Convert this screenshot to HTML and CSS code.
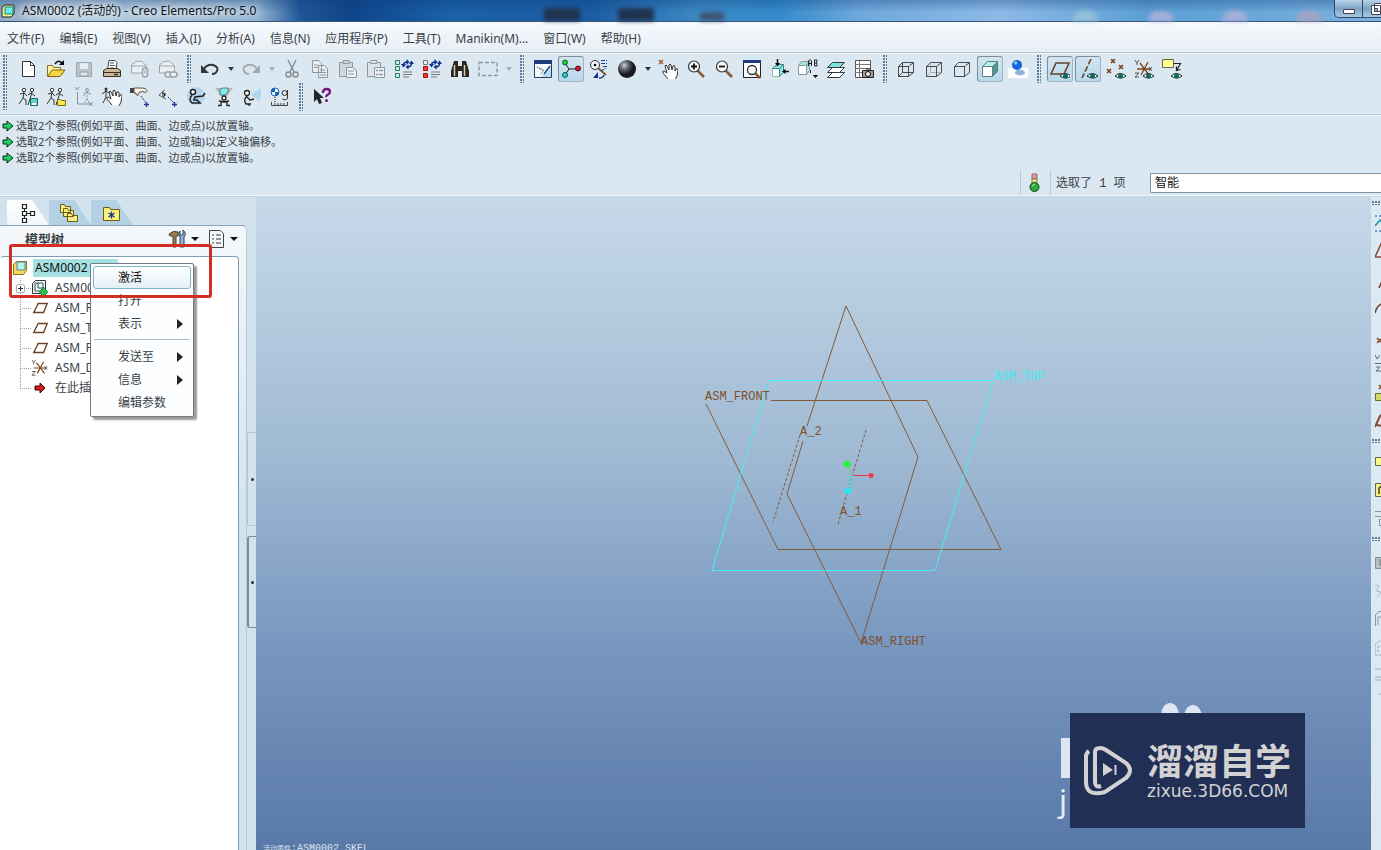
FILE: index.html
```html
<!DOCTYPE html>
<html lang="zh-CN">
<head>
<meta charset="utf-8">
<title>ASM0002 (活动的) - Creo Elements/Pro 5.0</title>
<link rel="stylesheet" href="styles.css">
</head>
<body>
<svg class="defs" aria-hidden="true">
  <symbol id="plane" viewBox="0 0 20 20"><path d="M8 5h10l-4 10H3z" fill="none" stroke="#6b4228" stroke-width="1.5"/></symbol>
  <symbol id="eye" viewBox="0 0 20 20"><path d="M9 16q5-5 11 0q-5 4-11 0z" fill="#fff" stroke="#222"/><circle cx="14.500" cy="16" r="2.500" fill="#0a6a5c"/></symbol>
  <symbol id="csys" viewBox="0 0 20 20"><path d="M3 10h14M6 4l9 12M14 3L7 16" stroke="#7a4420" fill="none" stroke-width="1.300"/><path d="M1 1l2 3 2-3M3 4v2M1 14h4l-4 4h4M15 8l3 4m0-4l-3 4" stroke="#555" fill="none"/></symbol>
  <symbol id="refresh" viewBox="0 0 20 20"><path d="M9.500 6q0-3 4-3M17.500 4q0 4-4 4" fill="none" stroke="#12308c" stroke-width="1.600"/><path d="M12.500 0l3 3-3 3zM7 5h5L9.500 8.500zM14.500 5.500l-3 2.500 3 2.500zM15 5h5l-2.500-3.500z" fill="#12308c"/><path d="M9 13h9M9 15.500h9M9 18h6" stroke="#777"/></symbol>
  <symbol id="hand" viewBox="0 0 20 20"><path d="M9 18L4 12q-1-2 1-2l3 2-2-7q1-2 2 0l2 4V4q1-2 2 0l1 5 1-4q2-1 2 1v4l1-2q2-1 2 1l-1 6-2 4" fill="#fff" stroke="#333"/></symbol>
  <symbol id="man" viewBox="0 0 20 20"><circle cx="6" cy="3" r="1.700"/><circle cx="14" cy="3" r="1.700"/><path d="M6 5l-1 6M2 7l4-1 3 3M5 11l-4 6M5 11l3 2v5M14 5l-2 7M10 8l3-2 4 3M12 12l-2 6M12 12l3 3"/></symbol>
  <symbol id="arrow" viewBox="0 0 12 12"><path d="M1 4h4V1l6 5-6 5V8H1z" fill="#20d060" stroke="#0b2a12"/></symbol>
</svg>

<header class="titlebar">
  <svg class="app-icon" viewBox="0 0 16 16"><path d="M2 4l3-2h9v9l-3 3H2z" fill="#f3ef8c" stroke="#222"/><path d="M5 4h8v7H5z" fill="#6fe8ee" stroke="#187"/></svg>
  <h1 class="title">ASM0002 (活动的) - Creo Elements/Pro 5.0</h1>
  <i class="blot"></i><i class="blot"></i><i class="blot small"></i>
  <i class="glow"></i><i class="glow rose"></i><i class="glow rose"></i><i class="glow red"></i>
  <div class="window-buttons">
    <button aria-label="最小化"><svg viewBox="0 0 14 14"><path d="M1.500 7.500h11v4h-11z" fill="#fff" stroke="#445"/></svg></button>
    <button aria-label="还原"><svg viewBox="0 0 14 14"><path d="M4.500 1.500h9v8h-9zM1.500 3.500h9v9h-9z" fill="#fff" stroke="#445" /><path d="M4.500 6.500h3v3h-3z" fill="#9bc" stroke="#445"/></svg></button>
  </div>
</header>

<nav class="menubar">
  <button>文件(F)</button><button>编辑(E)</button><button>视图(V)</button><button>插入(I)</button><button>分析(A)</button><button>信息(N)</button><button>应用程序(P)</button><button>工具(T)</button><button>Manikin(M)...</button><button>窗口(W)</button><button>帮助(H)</button>
</nav>

<section class="toolbars">
  <i class="grip tall"></i>
  <div class="toolbar-rows">
    <div class="toolbar">
      <button class="tool" aria-label="新建"><svg viewBox="0 0 20 20"><path d="M4.500 2.500h8l4 4v11h-12z" fill="#fff" stroke="#333"/><path d="M12.500 2.500v4h4" fill="none" stroke="#333"/></svg></button>
      <button class="tool" aria-label="打开"><svg viewBox="0 0 20 20"><path d="M1.500 17V6.500h5l1 2h7V11" fill="#fff3a0" stroke="#8a7420"/><path d="M1.500 17.500L6 11h13l-5 6.500z" fill="#f5d548" stroke="#7d6410"/><path d="M9 5q3-5 7-1" fill="none" stroke="#111" stroke-width="1.500"/><path d="M18 1v5h-5z"/></svg></button>
      <button class="tool" aria-label="保存"><svg viewBox="0 0 20 20"><path d="M2.500 3.500h15v14h-15z" fill="#bcc4ca" stroke="#9aa4ac"/><path d="M6 4h8v6H6z" fill="#e6ecf0"/><path d="M6 13h8v4H6z" fill="#dde5ea" stroke="#98a2aa"/></svg></button>
      <button class="tool" aria-label="打印"><svg viewBox="0 0 20 20"><path d="M5.500 11L7 1.500h6l2 2-1 7.500" fill="#fff" stroke="#444"/><path d="M8 4h4M8 6.500h5M8 9h4" stroke="#555"/><path d="M1.500 11.500l3-2h11l3 2v6h-17z" fill="#cdb697" stroke="#3a3027"/><path d="M2 13.500h16" stroke="#3a3027"/><path d="M12 15.500h4" stroke="#3a3027" stroke-width="1.500"/></svg></button>
      <button class="tool" aria-label="发送附件"><svg viewBox="0 0 20 20" fill="#e9eff3" stroke="#9aa3aa"><path d="M1.500 14V6q4-5 10-4l5 5v7z"/><path d="M2 7h14" fill="none"/><rect x="12.500" y="9" width="5" height="9" rx="2.500" stroke-width="1.500"/><path d="M15 11v4"/></svg></button>
      <button class="tool" aria-label="发送链接"><svg viewBox="0 0 20 20" fill="#e9eff3" stroke="#9aa3aa"><path d="M1.500 14V6q4-5 10-4l5 5v7z"/><path d="M2 7h14" fill="none"/><rect x="7" y="13" width="7" height="5" rx="2.500" stroke-width="1.500"/><rect x="12" y="13" width="7" height="5" rx="2.500" stroke-width="1.500"/></svg></button>
      <i class="grip"></i>
      <button class="tool" aria-label="撤消"><svg viewBox="0 0 20 20"><path d="M4 10q3-5 9-4 6 2 4 6-1 3-5 3" fill="none" stroke="#30363c" stroke-width="2"/><path d="M1 6v8h8z" fill="#30363c"/></svg></button>
      <button class="drop" aria-label="撤消列表"></button>
      <button class="tool" aria-label="重做"><svg viewBox="0 0 20 20"><path d="M16 10q-3-5-9-4-6 2-4 6 1 3 5 3" fill="none" stroke="#a3abb2" stroke-width="2"/><path d="M19 6v8h-8z" fill="#a3abb2"/></svg></button>
      <button class="drop off" aria-label="重做列表"></button>
      <button class="tool" aria-label="剪切"><svg viewBox="0 0 20 20" fill="none" stroke="#858d94" stroke-width="1.400"><path d="M6 1l6 12M14 1L8 13"/><circle cx="6.500" cy="15.500" r="2.500"/><circle cx="13.500" cy="15.500" r="2.500"/></svg></button>
      <button class="tool" aria-label="复制"><svg viewBox="0 0 20 20" fill="#e8eef2" stroke="#8f989f"><path d="M2.500 1.500h6l3 3v9h-9zM8.500 6.500h6l3 3v9h-9z"/><path d="M4 6h4M4 8.500h4M10 11h5M10 13.500h6M10 16h6"/></svg></button>
      <button class="tool" aria-label="粘贴"><svg viewBox="0 0 20 20" fill="#d0d7dc" stroke="#8f989f"><path d="M1.500 3.500h13v14h-13z"/><path d="M5 1.500h6v3H5z"/><path d="M8.500 8.500h6l4 3v7h-10z" fill="#eef2f5"/><path d="M10 12h6M10 15h6"/></svg></button>
      <button class="tool" aria-label="选择性粘贴"><svg viewBox="0 0 20 20" fill="#dde5ea" stroke="#8f989f"><path d="M1.500 3.500h13v14h-13z"/><path d="M5 1.500h6v3H5z"/><path d="M8.500 8.500h10v10h-10z" fill="#eef2f5"/><path d="M10 11.500h2M13 11.500h4M10 15.500h2M13 15.500h4" stroke-width="1.500"/></svg></button>
      <button class="tool" aria-label="再生"><svg viewBox="0 0 20 20"><path d="M1.500 1.500h4v4h-4zM1.500 7.500h4v4h-4zM1.500 14.500h4v4h-4z" fill="#c6ecdc" stroke="#317865"/><use href="#refresh"/></svg></button>
      <button class="tool" aria-label="再生管理器"><svg viewBox="0 0 20 20"><path d="M1.500 1.500h4v4h-4z" fill="#eee" stroke="#777"/><path d="M1.500 7.500h4v4h-4z" fill="#ee3a30" stroke="#a11"/><path d="M1.500 14.500h4v4h-4z" fill="#ee3a30" stroke="#a11"/><use href="#refresh"/></svg></button>
      <button class="tool" aria-label="查找"><svg viewBox="0 0 20 20"><path d="M4 2h4v5h4V2h4l3 10v6h-7v-6H8v6H1v-6z" fill="#2b2620"/><path d="M4.500 6v11M14.500 6v11" stroke="#d9c9ae" stroke-width="1.500"/></svg></button>
      <button class="tool" aria-label="选取框"><svg viewBox="0 0 20 20"><path d="M1 3.500h18v13H1z" fill="none" stroke="#8c959c" stroke-width="1.400" stroke-dasharray="4 2"/></svg></button>
      <button class="drop off" aria-label="选取框列表"></button>
      <i class="grip"></i>
      <button class="tool" aria-label="重画"><svg viewBox="0 0 20 20"><path d="M1.500 1.500h17v17h-17z" fill="#f4fbfe" stroke="#233c66"/><path d="M1 1h18v4H1z" fill="#1c3f7a"/><path d="M18 6v12H8z" fill="#b9ddf0"/><path d="M4 8l7 3-4 5M6 9l4 4" stroke="#444" stroke-dasharray="1 1" fill="none"/><path d="M17 7l-6 8" stroke="#1c3f7a" stroke-width="1.300"/></svg></button>
      <button class="tool on" aria-label="旋转中心"><svg viewBox="0 0 20 20"><path d="M4 4l4 6h9M8 10l-4 6" fill="none" stroke="#222"/><circle cx="4" cy="3.500" r="2.500" fill="#23c93a" stroke="#063"/><circle cx="17" cy="9.500" r="2.500" fill="#c3213a" stroke="#501"/><circle cx="4" cy="16" r="2.500" fill="#2fd6d0" stroke="#055"/></svg></button>
      <button class="tool" aria-label="定向模式"><svg viewBox="0 0 20 20"><circle cx="6" cy="6" r="4.500" fill="#eef6fa" stroke="#333"/><circle cx="6" cy="6" r="1.300"/><path d="M9 9l8 7" stroke="#7a5a3a" stroke-width="2"/><path d="M12 1.500h6M12 4.500h6M14 7.500h4M12 12l5-3" stroke="#1b3ba0" stroke-dasharray="4 1"/><path d="M10 19q4 0 5-3" stroke="#12308c" stroke-width="1.300" fill="none"/><path d="M9 13v6H4z" fill="#12308c"/></svg></button>
      <button class="tool" aria-label="外观库"><svg viewBox="0 0 20 20"><defs><radialGradient id="ball" cx=".35" cy=".3"><stop offset="0" stop-color="#c9ced2"/><stop offset=".5" stop-color="#5d636a"/><stop offset="1" stop-color="#17191c"/></radialGradient></defs><circle cx="10" cy="10" r="9" fill="url(#ball)"/></svg></button>
      <button class="drop" aria-label="外观列表"></button>
      <button class="tool" aria-label="拖动元件"><svg viewBox="0 0 20 20"><use href="#hand" x="1" y="2"/><path d="M1 1l4 4m0-4L1 5" stroke="#a2562a" stroke-width="1.500"/></svg></button>
      <button class="tool" aria-label="放大"><svg viewBox="0 0 20 20"><path d="M11 11l7 7" stroke="#8a5a35" stroke-width="2.600"/><circle cx="8" cy="7.500" r="5.500" fill="#f4f8fb" stroke="#333" stroke-width="1.200"/><path d="M5 7.500h6M8 4.500v6" stroke="#111" stroke-width="1.800"/></svg></button>
      <button class="tool" aria-label="缩小"><svg viewBox="0 0 20 20"><path d="M11 11l7 7" stroke="#8a5a35" stroke-width="2.600"/><circle cx="8" cy="7.500" r="5.500" fill="#f4f8fb" stroke="#333" stroke-width="1.200"/><path d="M5 7.500h6" stroke="#111" stroke-width="1.800"/></svg></button>
      <button class="tool" aria-label="重新调整"><svg viewBox="0 0 20 20"><path d="M1.500 2.500h17v16h-17z" fill="#fff" stroke="#222"/><path d="M1 1h18v3H1z" fill="#1d3a78"/><path d="M13 14l5 5" stroke="#8a5a35" stroke-width="2.500"/><circle cx="10" cy="11" r="4.500" fill="#eff6f5" stroke="#333" stroke-width="1.300"/></svg></button>
      <button class="tool" aria-label="重定向"><svg viewBox="0 0 20 20"><path d="M2.500 9.500h7v8h-7z" fill="#fff" stroke="#8ba"/><path d="M2.500 9.500l4-4h7l-4 4zM9.500 9.500l4-4v8l-4 4z" fill="#8ee5df" stroke="#488"/><path d="M7.500 0v5M19 12.500h-5" stroke="#111" stroke-width="1.500"/><path d="M5 4h5l-2.500 3.500zM15.500 10v5L12 12.500z"/></svg></button>
      <button class="tool" aria-label="视图列表"><svg viewBox="0 0 20 20"><path d="M.500 6.500h8v9h-8z" fill="#fff" stroke="#899"/><path d="M.500 6.500l3-4h8l-3 4zM8.500 6.500l3-4v9l-3 4z" fill="#a5e8e5" stroke="#899"/><path d="M10.500 7V2l1.500-1.500L13.500 2v5M10.500 4.500h3M16.500 1v6H19V4.500L18 4l1-1V1zM16.500 4H18M12.500 11v3" fill="none" stroke="#222"/><path d="M15 16h5l-2.500 3z"/></svg></button>
      <button class="tool" aria-label="层"><svg viewBox="0 0 20 20" stroke="#2f3b40"><path d="M1.500 18.500l5-5h12l-5 5z" fill="#fff"/><path d="M1.500 13.500l5-5h12l-5 5z" fill="#fff"/><path d="M1.500 8.500l5-5h12l-5 5z" fill="#7fe2dc"/></svg></button>
      <button class="tool" aria-label="视图管理器"><svg viewBox="0 0 20 20"><path d="M1.500 1.500h15v17h-15z" fill="#fff" stroke="#555"/><path d="M1 5.500h15M1 9.500h15M1 13.500h15M5.500 2v16" stroke="#777"/><path d="M8.500 11.500h11v7h-11z" fill="#a39e95" stroke="#222"/><path d="M12 10h4" stroke="#222"/><circle cx="14" cy="15" r="2.500" fill="#eee" stroke="#111"/></svg></button>
      <i class="grip"></i>
      <button class="tool" aria-label="线框"><svg viewBox="0 0 20 20" fill="none" stroke="#454b50"><path d="M2.500 7.500h10v10h-10zM6.500 3.500h11v10h-11zM2.500 7.500l4-4M12.500 7.500l5-4M12.500 17.500l5-4M2.500 17.500l4-4"/></svg></button>
      <button class="tool" aria-label="隐藏线"><svg viewBox="0 0 20 20" fill="none" stroke="#454b50"><path d="M6.500 4v9.500h11M2.500 17.500l4-4" stroke="#a9b3ba"/><path d="M2.500 7.500h10v10h-10zM2.500 7.500l4-4h11v10l-5 4M12.500 7.500l5-4"/></svg></button>
      <button class="tool" aria-label="消隐"><svg viewBox="0 0 20 20" fill="none" stroke="#454b50"><path d="M2.500 7.500h10v10h-10zM2.500 7.500l4-4h11v10l-5 4M12.500 7.500l5-4"/></svg></button>
      <button class="tool on" aria-label="着色"><svg viewBox="0 0 20 20" stroke="#66807f"><path d="M2.500 7.500h10v10h-10z" fill="#fff"/><path d="M2.500 7.500l5-5h10l-5 5z" fill="#b5f0ee"/><path d="M12.500 7.500l5-5v10l-5 5z" fill="#4b9a98"/></svg></button>
      <button class="tool" aria-label="增强真实感"><svg viewBox="0 0 20 20"><path d="M0 9h20v10H0z" fill="#fff"/><ellipse cx="12" cy="13.500" rx="5" ry="3" fill="#8eb4dc"/><circle cx="9" cy="6" r="5" fill="#1268d8"/><circle cx="7.500" cy="4" r="1.800" fill="#84c1ff"/></svg></button>
      <i class="grip"></i>
      <button class="tool on" aria-label="平面显示"><svg viewBox="0 0 20 20"><path d="M6 4h13l-5 11H1z" fill="none" stroke="#6b4228" stroke-width="1.600"/><use href="#eye" x="1" y="1"/></svg></button>
      <button class="tool on" aria-label="轴显示"><svg viewBox="0 0 20 20"><path d="M13 0L4 19" stroke="#6b4228" stroke-width="1.600" stroke-dasharray="6 2"/><use href="#eye" y="1"/></svg></button>
      <button class="tool" aria-label="点显示"><svg viewBox="0 0 20 20"><path d="M5 0l4 4m0-4L5 4M13 6l4 4m0-4l-4 4M1 10l4 4m0-4l-4 4" stroke="#7a4420" stroke-width="1.600"/><use href="#eye" y="1"/></svg></button>
      <button class="tool" aria-label="坐标系显示"><svg viewBox="0 0 20 20"><use href="#csys"/><use href="#eye" y="1"/></svg></button>
      <button class="tool" aria-label="注释显示"><svg viewBox="0 0 20 20"><path d="M.500.500h11v8h-11z" fill="#ffff8c" stroke="#665"/><path d="M12 4.500h6.500l-4 7m0-4v4l4-1" fill="none" stroke="#222" stroke-width="1.200"/><use href="#eye" y="1"/></svg></button>
    </div>
    <div class="toolbar">
      <button class="tool" aria-label="保存人体模型"><svg viewBox="0 0 20 20"><use href="#man" class="ink"/><path d="M12.500 11.500h7v7h-7z" fill="#5fcfc9" stroke="#266"/><path d="M14 16h4v2h-4z" fill="#fff"/></svg></button>
      <button class="tool" aria-label="打开人体模型"><svg viewBox="0 0 20 20"><use href="#man" class="ink"/><path d="M11.500 18.500v-6h3l1 1h4v5z" fill="#f7ea4c" stroke="#776a10"/></svg></button>
      <button class="tool" aria-label="人体坐标"><svg viewBox="0 0 20 20" fill="none" stroke="#899299"><path d="M3.500 5v12H16M1 0l2 3 2-3M15 15l4 4m0-4l-4 4" /><circle cx="13" cy="3" r="1.500"/><path d="M13 5v6M10 9V6h6v3M11 16l2-5 2 5" stroke-dasharray="2 1"/></svg></button>
      <button class="tool" aria-label="拖动人体"><svg viewBox="0 0 20 20"><circle cx="4" cy="2" r="1.500" fill="#333"/><path d="M4 3v7M0 7l4-3 5 3M4 10l-3 6" fill="none" stroke="#333"/><use href="#hand" x="1"/></svg></button>
      <button class="tool" aria-label="伸及"><svg viewBox="0 0 20 20"><path d="M4 1h7q6 0 6 3.500l-1 1-4-1-3 1-1 3-2-1V6H4z" fill="#fdf3e6" stroke="#554"/><path d="M0 1h4v5H0z" fill="#444"/><path d="M11 9l6 8" stroke="#1a3a90" stroke-dasharray="2 1"/><path d="M14 17.500h5M16.500 15v5" stroke="#1a3a90" stroke-width="1.300"/></svg></button>
      <button class="tool" aria-label="注视"><svg viewBox="0 0 20 20"><path d="M7 3L1 8l7 4M5 4q-2 4 1 7" fill="#fff" stroke="#555"/><path d="M4.500 5.500q2 2 .5 4.500l2.500-1V6z" fill="#123"/><path d="M10 10l6 6" stroke="#1a3a90" stroke-dasharray="2 1"/><path d="M14 17.500h5M16.500 15v5" stroke="#1a3a90" stroke-width="1.300"/></svg></button>
      <button class="tool" aria-label="可达区"><svg viewBox="0 0 20 20"><circle cx="10" cy="9" r="9" fill="#b1d6ee"/><circle cx="7" cy="5" r="2.500" fill="#fff" stroke="#222" stroke-width="1.500"/><path d="M6 8q-4 5 0 8h8l-3-3H8l1-3 8-1 2-3" fill="none" stroke="#222" stroke-width="1.500"/></svg></button>
      <button class="tool" aria-label="视野"><svg viewBox="0 0 20 20"><path d="M1 1h18l-6 8H7z" fill="#b6b6aa"/><path d="M6 2l3-1h5v5l-3 2H6z" fill="#86e8e8" stroke="#488"/><circle cx="10" cy="11" r="2" fill="#fff" stroke="#222" stroke-width="1.300"/><path d="M4 18.500h3v-3q3-2 6 0v3h3M5 14l5 1 5-1" fill="none" stroke="#222" stroke-width="1.300"/></svg></button>
      <button class="tool" aria-label="视锥"><svg viewBox="0 0 20 20"><path d="M9 8l9-7q3 7-1 13z" fill="#b1d6ee"/><circle cx="5" cy="6" r="2.500" fill="#fff" stroke="#222" stroke-width="1.300"/><path d="M5 9q-4 4-1 8h5M5 10l3 3 4-1M7 17v2" fill="none" stroke="#222" stroke-width="1.300"/></svg></button>
      <button class="tool" aria-label="质量分析"><svg viewBox="0 0 20 20"><circle cx="5" cy="5" r="4" fill="#fff" stroke="#1466c0"/><path d="M5 1v4H1a4 4 0 0 1 4-4M5 5h4a4 4 0 0 1-4 4z" fill="#1466c0"/><path d="M5 10v6" stroke="#111" stroke-dasharray="1 1"/><path d="M1.500 15v3.500h16V15M5 16v2M8 16v2M11 16v2M14 16v2" fill="none" stroke="#444"/><circle cx="14.500" cy="6" r="2.500" fill="none" stroke="#333"/><path d="M17.500 3v8q-1 3-5 1" fill="none" stroke="#333"/></svg></button>
      <i class="grip"></i>
      <button class="tool" aria-label="帮助"><svg viewBox="0 0 20 20"><path d="M2 2v13l3-3 2 5 3-1-2-5h4z" fill="#20252c"/><path d="M11 6q0-4 3.500-4T18 5q0 1.500-2 2.500T14.500 10" fill="none" stroke="#7a147c" stroke-width="2.400"/><circle cx="14.500" cy="13.500" r="1.500" fill="#7a147c"/></svg></button>
    </div>
  </div>
</section>

<section class="messages">
  <ul class="log">
    <li><svg><use href="#arrow"/></svg>选取2个参照(例如平面、曲面、边或点)以放置轴。</li>
    <li><svg><use href="#arrow"/></svg>选取2个参照(例如平面、曲面、边或轴)以定义轴偏移。</li>
    <li><svg><use href="#arrow"/></svg>选取2个参照(例如平面、曲面、边或点)以放置轴。</li>
  </ul>
  <div class="status">
    <span class="light"><svg viewBox="0 0 12 20"><path d="M4 1h5v5H4z" fill="#d99aa5" stroke="#966"/><path d="M4 6h5v5H4z" fill="#f4e27e" stroke="#875"/><circle cx="6.500" cy="14" r="4.500" fill="#32a83c" stroke="#0a4a14"/><path d="M4 13l3-2" stroke="#b7f0b0"/></svg></span>
    <label class="picked" for="filter">选取了 1 项</label>
    <select id="filter" class="filter"><option>智能</option></select>
  </div>
</section>

<main class="workspace">
  <aside class="side">
    <div class="navigator">
      <div class="tabs">
        <button class="tab current" aria-label="模型树"><svg viewBox="0 0 20 20" fill="none" stroke="#222" stroke-width="1.200"><path d="M5.500 1.500h4v4h-4zM5.500 8.500h4v4h-4zM13.500 8.500h4v4h-4zM5.500 15.500h4v4h-4zM9.500 10.500h4M7.500 5.500v3M7.500 12.500v3"/></svg></button>
        <button class="tab" aria-label="文件夹浏览器"><svg viewBox="0 0 20 20" fill="#f7ec86" stroke="#6b5c10"><path d="M1.500 9.500v-8h4l1 2h5v6zM4.500 13.500v-8h4l1 2h5v6zM8.500 18.500v-8h4l1 2h5v6z"/></svg></button>
        <button class="tab" aria-label="收藏夹"><svg viewBox="0 0 20 20"><path d="M2.500 17.500v-13h6l1 2h9v11z" fill="#f9ee7e" stroke="#6b5c10"/><path d="M10.500 8.500v7M7.500 10l6 4M13.500 10l-6 4" stroke="#1b2c8c" stroke-width="1.300"/></svg></button>
      </div>
      <div class="pane">
        <div class="pane-head">
          <h2>模型树</h2>
          <button class="pane-tool" aria-label="设置"><svg viewBox="0 0 20 20"><path d="M1 5q4-4 9-2v4H8v11H5V7H2z" fill="#a07c56" stroke="#443"/><path d="M12 18V8q-3-3 0-6v4h3V1q4 3 1 7v10z" fill="#8fb3d9" stroke="#345"/></svg></button>
          <button class="drop big" aria-label="设置列表"></button>
          <button class="pane-tool" aria-label="显示"><svg viewBox="0 0 20 20"><path d="M2.500 1.500h11l3 3v14h-14z" fill="#f5f8fa" stroke="#444"/><path d="M5 6h2M9 6h5M5 10h2M9 10h5M5 14h2M9 14h5" stroke="#333"/></svg></button>
          <button class="drop big" aria-label="显示列表"></button>
        </div>
        <ul class="tree">
          <li class="root"><svg class="node" viewBox="0 0 18 18"><path d="M2.500 5.500l3-3h10v9l-3 4h-10z" fill="#f3d95c" stroke="#8b7420"/><path d="M6 3h8v8H6z" fill="#b8f1f2" stroke="#588"/></svg><span class="name selected">ASM0002</span></li>
          <li class="leaf"><button class="expand" aria-label="展开"><svg viewBox="0 0 7 7"><path d="M1 3.500h5M3.500 1v5" stroke="#234"/></svg></button><svg class="node" viewBox="0 0 18 18"><path d="M1.500 4.500l3-3h10v9l-3 4h-10z" fill="#eef8f8" stroke="#333"/><path d="M4 4h8v8H4zM7 4v5h5" fill="none" stroke="#355"/><path d="M12.500 8l4 5-4 5-4-5z" fill="#2dc34a" stroke="#084"/></svg><span class="name">ASM0002_SKEL</span></li>
          <li class="leaf"><svg class="node"><use href="#plane"/></svg><span class="name">ASM_RIGHT</span></li>
          <li class="leaf"><svg class="node"><use href="#plane"/></svg><span class="name">ASM_TOP</span></li>
          <li class="leaf"><svg class="node"><use href="#plane"/></svg><span class="name">ASM_FRONT</span></li>
          <li class="leaf"><svg class="node"><use href="#csys"/></svg><span class="name">ASM_DEF_CSYS</span></li>
          <li class="leaf last"><svg class="node" viewBox="0 0 18 18"><path d="M4 7h5V4l5 5-5 5v-3H4z" fill="#d71c1c" stroke="#400"/></svg><span class="name">在此插入</span></li>
        </ul>
      </div>
    </div>
    <div class="splitter">
      <button class="knob" aria-label="折叠导航器"></button>
      <button class="knob sunk" aria-label="展开浏览器"></button>
    </div>
    <div class="context" role="menu">
      <button role="menuitem" class="hot">激活</button>
      <button role="menuitem">打开</button>
      <button role="menuitem" class="more">表示</button>
      <hr>
      <button role="menuitem" class="more">发送至</button>
      <button role="menuitem" class="more">信息</button>
      <button role="menuitem">编辑参数</button>
    </div>
    <div class="callout"></div>
  </aside>

  <section class="viewport">
    <svg class="model">
      <g transform="translate(-256 -197)" fill="none">
        <path class="datum" d="M807 426L846 306 918 457 861 643 787 494 803 441M771 400.500H927L1001 549.500H778L706 404"/>
        <path class="datum axis" d="M800 435L773 522M866 430L838 524"/>
        <path class="picked-plane" d="M769 380.500H993L935 570.500H712z"/>
        <path d="M853 475.500h18" stroke="#e8384a"/><path d="M853 475l-5 16" stroke="#22f4f4"/><path d="M853 475l-6-11" stroke="#8fbf50"/>
        <circle cx="871" cy="475.500" r="2.500" fill="#f03a4a"/><circle cx="848" cy="491" r="3" fill="#18f0f4"/><circle cx="847" cy="464" r="3.500" fill="#2cf23a"/>
        <g class="tag"><text x="705" y="400">ASM_FRONT</text><text x="800" y="435">A_2</text><text x="840" y="515">A_1</text><text x="861" y="645">ASM_RIGHT</text><text x="994" y="380" class="lit">ASM_TOP</text></g>
      </g>
    </svg>
    <p class="active-part"><small>活动零件</small>:ASM0002_SKEL</p>
    <div class="watermark">
      <svg class="ghost" viewBox="0 0 235 130"><ellipse cx="100" cy="14" rx="9" ry="12"/><ellipse cx="123" cy="16" rx="9" ry="12"/><path d="M-9 37h12v40h-12z"/></svg>
      <span class="ghost-letter">j</span>
      <div class="brand">
        <svg class="logo" viewBox="0 0 50 52" fill="none" stroke="#d2d2d2" stroke-width="4"><path d="M18 41q-6 2-6-4V7q0-4 5-4 3 0 6 2l20 13q8 7 0 15L22 47Q3 52 3 37V12q0-4 3-6"/><path d="M20 18v13l10-6z" fill="#d2d2d2" stroke="none"/><path d="M32.500 20v10" stroke-width="2"/></svg>
        <div class="brand-text"><strong>溜溜自学</strong><span>zixue.3D66.COM</span></div>
      </div>
    </div>
  </section>

  <aside class="feature-bar">
    <i class="grip flat"></i>
    <button aria-label="草绘"><svg viewBox="0 0 20 20"><path d="M0 2h20M0 17h20" stroke="#1d4f9a" stroke-dasharray="2 2"/><path d="M0 12L5 6l4 6" fill="none" stroke="#2a8fa0" stroke-width="1.500"/></svg></button>
    <button aria-label="平面"><svg viewBox="0 0 20 20"><path d="M6 2L0 15h12z" fill="none" stroke="#8a4630" stroke-width="1.500"/></svg></button>
    <button aria-label="轴"><svg viewBox="0 0 20 20"><path d="M4 18l4-9" stroke="#6b4228" stroke-width="1.600"/></svg></button>
    <button aria-label="曲线"><svg viewBox="0 0 20 20"><path d="M0 15Q2 6 10 5" fill="none" stroke="#6b4228" stroke-width="1.500"/></svg></button>
    <button aria-label="点"><svg viewBox="0 0 20 20"><path d="M2 12l5 5m0-5l-5 5" stroke="#8a4a25" stroke-width="1.500"/></svg></button>
    <button aria-label="坐标系"><svg viewBox="0 0 20 20"><path d="M0 1l2 4 3-4M0 9.500h12M1 13h4l-4 4h5" fill="none" stroke="#55667a"/></svg></button>
    <button aria-label="分析特征"><svg viewBox="0 0 20 20"><path d="M4 3l4 4m0-4L4 7" stroke="#8a4a25" stroke-width="1.500"/><path d="M.500 11.500h8v7h-8z" fill="#cfda66" stroke="#667020"/></svg></button>
    <button aria-label="参照"><svg viewBox="0 0 20 20"><path d="M0 17L5 6l5-3M2 15l6 1" fill="none" stroke="#8a4630" stroke-width="2"/></svg></button>
    <i class="grip flat"></i>
    <button aria-label="注释"><svg viewBox="0 0 20 20"><path d="M.500 5.500h14v8H.500z" fill="#fafa8c" stroke="#665"/></svg></button>
    <button aria-label="文件夹"><svg viewBox="0 0 20 20"><path d="M.500 3.500h14v13H.500z" fill="#f6f080" stroke="#665"/><path d="M4 14V8l4-3" fill="none" stroke="#444" stroke-width="1.500"/></svg></button>
    <button aria-label="装配"><svg viewBox="0 0 20 20"><path d="M0 3.500h10v5H0M4.500 11.500h8v6h-8z" fill="none" stroke="#8a949b"/></svg></button>
    <i class="grip flat last"></i>
    <button aria-label="孔" class="dim"><svg viewBox="0 0 20 20"><path d="M.500 4.500h14v11H.500z" fill="#aab8b4" stroke="#778"/><path d="M5 6v6h6" fill="none" stroke="#555"/></svg></button>
    <button aria-label="筋" class="dim"><svg viewBox="0 0 20 20"><path d="M0 4l4 1-3 5 5 1-3 5" fill="none" stroke="#a6afb4"/></svg></button>
    <button aria-label="倒圆角" class="dim"><svg viewBox="0 0 20 20"><path d="M.500 17V6q2-4 6-4h6M3 16V8h8" fill="none" stroke="#778087"/></svg></button>
    <button aria-label="倒角" class="dim"><svg viewBox="0 0 20 20"><path d="M0 17V8l4-4h8M3 15V9h6M0 18h12" fill="none" stroke="#8a9399" stroke-dasharray="3 1"/></svg></button>
    <button aria-label="阵列" class="dim"><svg viewBox="0 0 20 20"><path d="M0 4h12M0 12h12M0 15h12" stroke="#939ca3"/></svg></button>
    <button aria-label="镜像" class="dim"><svg viewBox="0 0 20 20"><path d="M3 1h8" stroke="#a6afb4"/></svg></button>
  </aside>
</main>
</body>
</html>
```
FILE: styles.css
```css
* { box-sizing: border-box; }
html, body { height: 100%; }
body {
  margin: 0;
  display: flex;
  flex-direction: column;
  overflow: hidden;
  background: #dbe8f2;
  color: #3a3f46;
  font: 12px/16px "Noto Sans", "Noto Sans CJK SC", sans-serif;
}
button {
  margin: 0;
  padding: 0;
  border: 0;
  background: none;
  color: inherit;
  font: inherit;
}
h1, h2, ul, p { margin: 0; padding: 0; font-size: 12px; }
ul { list-style: none; }
.defs { display: none; }

.titlebar {
  position: relative;
  flex: none;
  display: flex;
  align-items: center;
  gap: 6px;
  height: 22px;
  border-bottom: 1px solid #3a5578;
  background:
    linear-gradient(#0d3a7a55, transparent 60%),
    linear-gradient(90deg, #90a9c6, #b8ccda 60px, #a5c1d8 180px, #8db0cf 260px, #1f5797 300px, #0f4489 350px, #1a61a8 450px, #1b5ca3 590px, #3b89c4 700px, #338acb 780px, #6fa9dc 860px, #8dbae6 1000px, #5c9fd4 1150px, #7ab2df 100%);
}
.app-icon { width: 16px; height: 16px; }
.title { font-weight: 400; color: #10151c; text-shadow: 0 0 6px #fff, 0 0 8px #fff; }
.blot, .glow {
  position: absolute;
  bottom: 0;
  left: 544px;
  width: 36px;
  height: 13px;
  background: #20344f;
  filter: blur(2px);
}
.blot + .blot { left: 618px; }
.blot.small { left: 700px; width: 24px; height: 9px; background: #3d5673; }
.glow { left: 1072px; width: 26px; height: 10px; border-radius: 10px 10px 0 0; background: #94bfd6; }
.glow.rose { left: 1148px; background: #a6aed8; }
.glow.rose + .rose { left: 1222px; }
.glow.red { left: 1296px; background: #a3a4c4; }
.window-buttons {
  position: absolute;
  top: 0;
  right: 0;
  display: flex;
  width: 47px;
  height: 18px;
  overflow: hidden;
  border: 1px solid #2c4a6a;
  border-width: 0 0 1px 1px;
  border-radius: 0 0 0 5px;
  background: linear-gradient(#b9d3ea, #7fa3c4 50%, #a7c9e2);
}
.window-buttons button { flex: none; display: flex; align-items: center; justify-content: center; width: 28px; height: 18px; border-right: 1px solid #2c4a6a; }
.window-buttons svg { width: 14px; height: 14px; }

.menubar {
  flex: none;
  display: flex;
  gap: 1px;
  height: 31px;
  padding-top: 4px;
  border-bottom: 1px solid #aec3d4;
  background: linear-gradient(#f7fafd, #e6eef5);
}
.menubar button { padding: 0 7px; white-space: nowrap; }

.toolbars {
  flex: none;
  display: flex;
  height: 62px;
  padding: 1px 0 4px;
  overflow: hidden;
  border-bottom: 1px solid #b5c9d8;
  border-top: 1px solid #f5f9fc;
}
.toolbar { display: flex; height: 28px; }
.grip { flex: none; width: 14px; display: flex; justify-content: center; }
.grip::before {
  content: "";
  width: 4px;
  background: radial-gradient(circle at 1px 1px, #5b7b9d 1px, transparent 1px) 0 0 / 3px 3px;
}
.grip.tall { padding-right: 4px; }
.tool {
  flex: none;
  display: flex;
  align-items: center;
  justify-content: center;
  width: 26px;
  height: 26px;
  margin: 1px;
  border: 1px solid transparent;
  border-radius: 3px;
}
.tool.on {
  border-color: #7b8ea0 #9fb3c3 #9fb3c3 #7b8ea0;
  background: linear-gradient(#d3e4ee, #b7d9ec);
}
.tool svg { flex: none; width: 20px; height: 20px; }
.ink { fill: #fff; stroke: #333; }
#man path { fill: none; }
.drop { flex: none; width: 13px; display: flex; align-items: center; justify-content: center; }
.drop::before {
  content: "";
  border: 3px solid transparent;
  border-top: 4px solid #2d3740;
  border-bottom: 0;
}
.drop.off::before { border-top-color: #a7b2ba; }
.drop.big::before { border-width: 4px 4px 0; border-top-color: #111; }

.messages { flex: none; border-top: 1px solid #f5f9fc; border-bottom: 1px solid #f2f7fb; padding-top: 2px; }
.log { font-size: 11px; }
.log li { display: flex; align-items: center; height: 16px; padding-left: 2px; gap: 2px; }
.log svg { width: 12px; height: 12px; }
.status { display: flex; justify-content: flex-end; height: 29px; padding-top: 4px; }
.light { display: flex; align-items: center; padding-left: 7px; width: 31px; border: 1px solid #b9cad6; border-width: 0 1px; }
.light svg { width: 12px; height: 20px; }
.picked { width: 99px; padding: 6px 0 0 5px; font-family: "Liberation Mono", "Noto Sans CJK SC", monospace; }
.filter {
  appearance: none;
  width: 231px;
  height: 20px;
  margin-top: 3px;
  padding: 0 4px;
  border: 1px solid #7d93a6;
  border-right: 0;
  border-radius: 2px 0 0 2px;
  background: #fff;
  color: #111;
  font: inherit;
}

.workspace { flex: 1; min-height: 0; display: flex; border-top: 1px solid #c3d6e4; }
.side { position: relative; flex: none; display: flex; width: 256px; background: #d2e3ee; }
.navigator { flex: 1; min-width: 0; display: flex; flex-direction: column; }
.tabs { display: flex; height: 28px; padding: 3px 0 0 7px; }
.tab {
  display: flex;
  align-items: center;
  width: 42px;
  padding-left: 10px;
  border-radius: 3px 0 0 0;
  background: #b4d0e4;
  clip-path: polygon(0 0, 60% 0, 100% 100%, 0 100%);
}
.tab.current { background: linear-gradient(#fff, #f0f6fa); }
.tab svg { width: 20px; height: 20px; }
.pane {
  flex: 1;
  min-height: 0;
  display: flex;
  flex-direction: column;
  border: 1px solid #8ba6ba;
  border-width: 1px 1px 0 0;
  border-right-color: #b3cbdb;
  border-radius: 0 5px 0 0;
  padding-right: 7px;
  background: linear-gradient(#f4f8fb, #d2e3ee 300px);
}
.pane-head { display: flex; align-items: center; height: 30px; padding: 0 0 4px 25px; }
.pane-head h2 { flex: 1; font-size: 13px; }
.pane-tool { width: 20px; height: 20px; }
.pane-tool svg { width: 20px; height: 20px; display: block; }
.drop.big { width: 14px; margin-right: 5px; }
.drop.big:last-child { margin-right: -2px; }
.tree {
  flex: 1;
  border: 1px solid #7d9cb3;
  border-left-color: transparent;
  border-bottom: 0;
  border-radius: 4px 4px 0 0;
  padding: 1px 0 0 10px;
  background: #fff;
}
.tree li { position: relative; display: flex; align-items: center; height: 20px; }
.node { flex: none; width: 18px; height: 18px; }
.root .name { margin-left: 4px; padding: 0 30px 0 2px; line-height: 18px; }
.selected { background: #a5e0e2; color: #111; }
.leaf { padding-left: 20px; gap: 6px; }
.leaf::before {
  content: "";
  position: absolute;
  left: 9px;
  top: 0;
  width: 10px;
  height: 10px;
  border: 1px dotted #9aa3aa;
  border-width: 0 0 1px 1px;
}
.leaf:not(.last)::after { content: ""; position: absolute; left: 9px; top: 10px; height: 10px; border-left: 1px dotted #9aa3aa; }
.expand {
  position: absolute;
  z-index: 1;
  left: 5px;
  top: 6px;
  width: 9px;
  height: 9px;
  border: 1px solid #9fb0bd;
  border-radius: 2px;
  background: #fff;
}
.expand svg { display: block; width: 7px; height: 7px; }

.splitter { flex: none; width: 9px; display: flex; flex-direction: column; gap: 10px; padding-top: 235px; }
.knob { height: 94px; border: 1px solid #b3c8d6; border-right: 0; border-radius: 3px 0 0 3px; display: flex; align-items: center; justify-content: center; }
.knob::before { content: ""; width: 3px; height: 3px; border-radius: 2px; background: #234; }
.knob.sunk { height: 92px; border-color: #7a8e9c; border-left-width: 2px; }

.context {
  position: absolute;
  z-index: 2;
  left: 90px;
  top: 66px;
  width: 104px;
  padding: 2px;
  border: 1px solid #6f7b85;
  border-radius: 2px;
  background: #fdfeff;
  box-shadow: 3px 3px 2px #0006;
}
.context button { display: block; position: relative; width: 100%; height: 23px; padding-left: 24px; border: 1px solid transparent; text-align: left; line-height: 20px; }
.context .hot { border-color: #85b4c6; border-radius: 3px; background: linear-gradient(#fff, #e4f0f6); color: #111; }
.context .more::after { content: ""; position: absolute; right: 7px; top: 6px; border: 5px solid transparent; border-left: 6px solid #222; border-right: 0; }
.context hr { height: 1px; margin: 4px 1px 5px; border: 0; background: #b3bdc5; }
.callout { position: absolute; z-index: 3; left: 9px; top: 47px; width: 203px; height: 54px; border: 3px solid #d22f24; border-radius: 3px; pointer-events: none; }

.viewport { position: relative; flex: 1; min-width: 0; overflow: hidden; background: linear-gradient(#c6d9e9, #9fb9d3 40%, #7998c0 68%, #5878a8); }
.model { display: block; width: 100%; height: 100%; }
.datum { stroke: #835a38; }
.axis { stroke-dasharray: 3 2; }
.picked-plane { stroke: #43efef; }
.tag { fill: #7f4f28; font: 12px "Liberation Mono", monospace; }
.lit { fill: #3cecec; }
.active-part { position: absolute; left: 7px; bottom: -6px; color: #dbe4ee; font: 10px/14px "Liberation Mono", "Noto Sans CJK SC", monospace; }
.active-part small { font-size: 7px; }

.watermark { position: absolute; right: 66px; bottom: 22px; }
.ghost { position: absolute; left: 0; top: -12px; width: 235px; height: 130px; overflow: visible; fill: #dce5f1; }
.ghost-letter { position: absolute; left: -11px; top: 67px; color: #e6edf6; font: 31px/40px "Noto Sans", sans-serif; }
.brand { position: relative; display: flex; align-items: center; gap: 14px; width: 235px; height: 115px; padding-left: 13px; background: #222f55; color: #d2d2d2; }
.logo { flex: none; width: 50px; height: 52px; }
.brand-text { display: flex; flex-direction: column; gap: 6px; white-space: nowrap; }
.brand-text strong { font: 700 36px/34px "Noto Sans CJK SC", sans-serif; }
.brand-text span { font: 17px/18px "DejaVu Sans", sans-serif; }

.feature-bar { flex: none; width: 10px; overflow: hidden; display: flex; flex-direction: column; background: #dbe9f3; }
.feature-bar button { flex: none; width: 24px; height: 28px; padding: 4px 0 0 4px; }
.feature-bar svg { display: block; width: 20px; height: 20px; }
.feature-bar .dim { opacity: .8; }
.grip.flat { width: 28px; height: 11px; align-items: center; }
.grip.flat::before { width: 26px; height: 4px; }
.grip.flat ~ .flat { margin-top: 3px; }
.grip.flat.last { margin-bottom: 3px; }
```
